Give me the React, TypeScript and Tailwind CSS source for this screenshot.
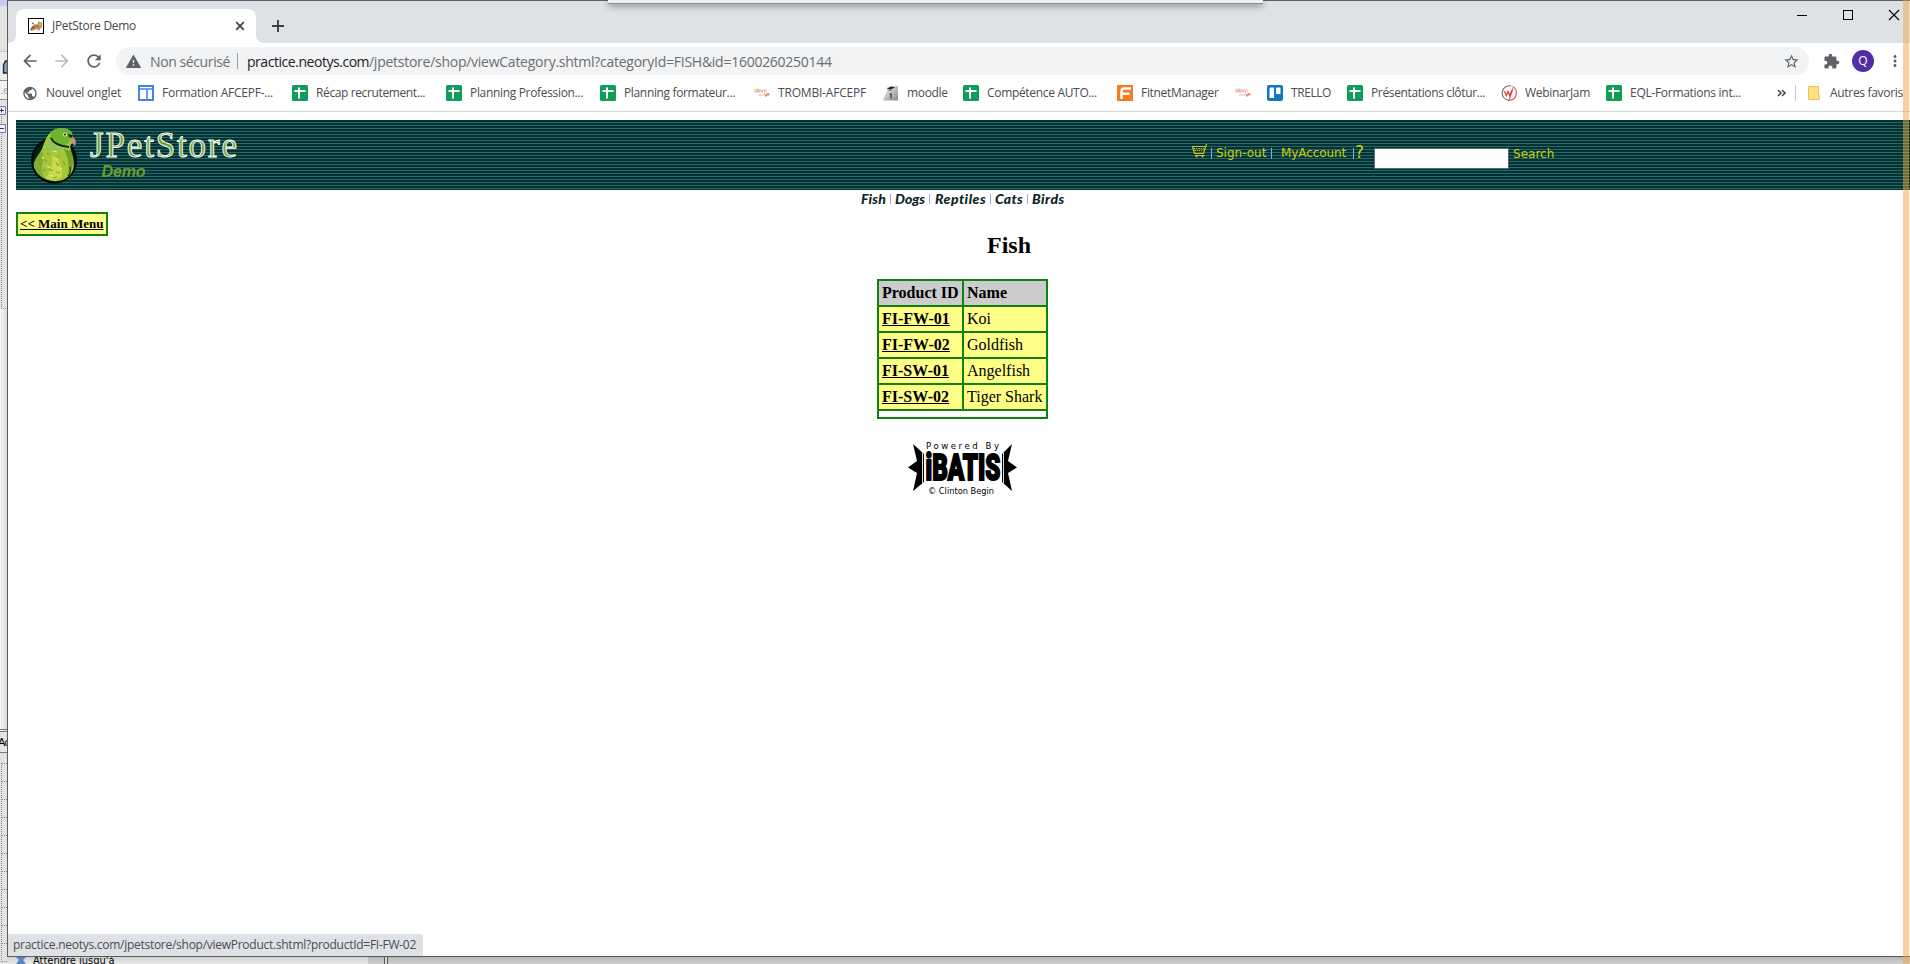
import type { ReactNode } from "react";
import { MdArrowBack, MdArrowForward, MdRefresh, MdWarning, MdStarBorder, MdExtension, MdMoreVert, MdPublic } from "react-icons/md";

const Sheet = () => (
  <svg width="16" height="16" viewBox="0 0 16 16">
    <rect width="16" height="16" rx="1.5" fill="#0f9d58" />
    <path d="M2.5 6h11M7 2.5v11" stroke="#fff" strokeWidth="2" fill="none" />
  </svg>
);

const Globe = () => <MdPublic className="size-[17px] text-[#5f6368]" />;

const Sites = () => (
  <svg width="16" height="16" viewBox="0 0 16 16">
    <rect x="1" y="1" width="14" height="14" fill="#fff" stroke="#4285e8" strokeWidth="2" />
    <path d="M1 4h14M9 4v11" stroke="#4285e8" strokeWidth="1.6" />
  </svg>
);

const Afcepf = () => (
  <svg width="16" height="16" viewBox="0 0 16 16">
    <g fill="none" strokeWidth="1">
      <circle cx="1.800" cy="5.800" r="1.300" stroke="#f2a57a" />
      <path d="M4 3.500v4" stroke="#e9856a" />
      <circle cx="6.200" cy="5.900" r="1.300" stroke="#f2a57a" />
      <path d="M8.500 7.500V5h2v2.500M12 4v3.500" stroke="#e3bcb0" />
      <path d="M4 10h6.500" stroke="#bcc6dc" />
      <path d="M10.500 8.500l1.500 3 1.200-3M13 9h3M14 8v3" stroke="#ee7a4a" />
    </g>
  </svg>
);

const Moodle = () => (
  <svg width="16" height="16" viewBox="0 0 16 16">
    <defs>
      <linearGradient id="md" x1="0" y1="0" x2="1" y2="1">
        <stop offset="0" stopColor="#fff" />
        <stop offset="1" stopColor="#858585" />
      </linearGradient>
    </defs>
    <path d="M0 15.500L4 5V1h11v14.500z" fill="url(#md)" />
    <path d="M3.500 4L8 1.500l4 .8-3.500 2z" fill="#222" />
    <path d="M5 5.500c1-1.500 3-1.500 4 0z" fill="#444" />
    <path d="M6.500 9h2.500M8 9.500v4" stroke="#333" strokeWidth="1.200" />
  </svg>
);

const Fitnet = () => (
  <svg width="16" height="16" viewBox="0 0 16 16">
    <rect width="16" height="16" fill="#f47b20" />
    <path d="M14 3.500H7Q4.500 3.500 4.500 6.500V14M4.500 8.800H12.500" stroke="#fff" strokeWidth="2.400" fill="none" />
  </svg>
);

const Trello = () => (
  <svg width="16" height="16" viewBox="0 0 16 16">
    <rect width="16" height="16" rx="2" fill="#0f77bd" />
    <rect x="2.500" y="2.500" width="4.500" height="10.500" rx=".6" fill="#fff" />
    <rect x="9" y="2.500" width="4.500" height="6.500" rx=".6" fill="#fff" />
  </svg>
);

const Webinar = () => (
  <svg width="16" height="16" viewBox="0 0 16 16" fill="none">
    <path d="M10.500 1A7.300 7.300 0 1 0 8 15.300" stroke="#777" strokeWidth="1.100" />
    <path d="M11.500 1.600A7.300 7.300 0 0 1 8 15.300L12 3.500" stroke="#d9544f" strokeWidth="1.100" />
    <path d="M3.500 6l1.800 4.500L7 6.500l1.700 4L11 5" stroke="#e0433e" strokeWidth="1.400" />
  </svg>
);

type Mark = { icon: ReactNode; text: string; slot: string; track: string };

const marks: Mark[] = [
  { icon: <Globe />, text: "Nouvel onglet", slot: "w-[116px]", track: "tracking-[-0.2px]" },
  { icon: <Sites />, text: "Formation AFCEPF-...", slot: "w-[154px]", track: "tracking-[-0.24px]" },
  { icon: <Sheet />, text: "Récap recrutement...", slot: "w-[154px]", track: "tracking-[-0.38px]" },
  { icon: <Sheet />, text: "Planning Profession...", slot: "w-[154px]", track: "tracking-[-0.33px]" },
  { icon: <Sheet />, text: "Planning formateur...", slot: "w-[154px]", track: "tracking-[-0.35px]" },
  { icon: <Afcepf />, text: "TROMBI-AFCEPF", slot: "w-[129px]", track: "tracking-[-0.19px]" },
  { icon: <Moodle />, text: "moodle", slot: "w-[80px]", track: "tracking-[-0.34px]" },
  { icon: <Sheet />, text: "Compétence AUTO...", slot: "w-[154px]", track: "tracking-[-0.32px]" },
  { icon: <Fitnet />, text: "FitnetManager", slot: "w-[118px]", track: "tracking-[-0.31px]" },
  { icon: <Afcepf />, text: "", slot: "w-[32px]", track: "" },
  { icon: <Trello />, text: "TRELLO", slot: "w-[80px]", track: "tracking-[-0.42px]" },
  { icon: <Sheet />, text: "Présentations clôtur...", slot: "w-[154px]", track: "tracking-[-0.36px]" },
  { icon: <Webinar />, text: "WebinarJam", slot: "w-[105px]", track: "tracking-[-0.31px]" },
  { icon: <Sheet />, text: "EQL-Formations int...", slot: "w-[171px]", track: "tracking-[-0.29px]" },
];

const TabStrip = () => (
  <div className="flex h-[43px] border-t border-[#5d5e66] bg-[#dee1e6]">
    <div className="w-2 bg-white">
      <div className="h-full w-full rounded-br-lg bg-[#dee1e6]" />
    </div>
    <div className="mt-2 flex w-[240px] items-center rounded-t-lg bg-white pl-3">
      <svg width="16" height="16" viewBox="0 0 16 16">
        <rect x=".5" y=".5" width="15" height="15" fill="#fff" stroke="#000" />
        <path d="M2 12l2-4 3-2 2 1 1.500-4 2 1.500L14 4v5l-2 2-1 2-2-2-3 1-2 1z" fill="#b98f5f" />
        <path d="M3 12l2-3 2 1M8 7l2 2M6 6l-2-1" stroke="#6b4a2b" fill="none" />
        <path d="M11 5h2v3h-2z" fill="#e0b55b" />
      </svg>
      <span className="ml-2 grow whitespace-pre text-[12px] tracking-[-0.29px] text-[#45484c]">JPetStore Demo</span>
      <svg width="10" height="10" viewBox="0 0 10 10" className="mr-[11px]">
        <path d="M1.200 1.200l7.600 7.600M8.800 1.200L1.200 8.800" stroke="#3c4043" strokeWidth="1.700" />
      </svg>
    </div>
    <div className="w-2 bg-white">
      <div className="h-full w-full rounded-bl-lg bg-[#dee1e6]" />
    </div>
    <svg width="12" height="12" viewBox="0 0 12 12" className="mt-[19px] ml-2">
      <path d="M6 0v12M0 6h12" stroke="#3c4043" strokeWidth="1.900" />
    </svg>
    <div className="grow" />
    <svg width="104" height="12" viewBox="0 0 104 12" className="mt-2 mr-[9px]" fill="none" stroke="#000">
      <path d="M0 6.500h10" />
      <rect x="46.500" y="1.500" width="9" height="9" />
      <path d="M92 1l10 10M102 1l-10 10" strokeWidth="1.100" />
    </svg>
  </div>
);

const Toolbar = () => (
  <div className="flex h-9 items-center bg-white">
    <MdArrowBack className="ml-3 size-5 text-[#5f6368]" />
    <MdArrowForward className="ml-3 size-5 text-[#babcbe]" />
    <MdRefresh className="ml-3 size-5 text-[#5f6368]" />
    <div className="ml-3 flex h-7 w-[1693px] items-center rounded-full bg-[#f1f3f4] pl-[9px] text-[14px] text-[#6a6e73]">
      <MdWarning className="size-[17px] text-[#5f6368]" />
      <span className="ml-2 w-[80px] whitespace-pre tracking-[-0.4px]">Non sécurisé</span>
      <div className="ml-[7px] h-4 w-px bg-[#9a9da1]" />
      <span className="ml-[9px] w-[122px] whitespace-pre tracking-[-0.46px] text-[#202124]">practice.neotys.com</span>
      <span className="whitespace-pre tracking-[-0.26px]">/jpetstore/shop/viewCategory.shtml?categoryId=FISH&amp;id=1600260250144</span>
      <MdStarBorder className="mr-[9px] ml-auto size-[17px] text-[#5f6368]" />
    </div>
    <MdExtension className="ml-[14px] size-[17px] text-[#5f6368]" />
    <div className="ml-3 flex size-[22px] items-center justify-center rounded-full bg-[#512da8] text-[12px] text-white">Q</div>
    <MdMoreVert className="ml-3 size-[18px] text-[#5f6368]" />
  </div>
);

const Bookmarks = () => (
  <div className="flex h-[33px] items-center border-b border-[#d5d7d9] bg-white pb-1 pl-[14px] text-[12px] text-[#4a4c50]">
    {marks.map((m, i) => (
      <div key={i} className={"flex shrink-0 items-center gap-2 whitespace-pre " + m.slot}>
        <span className="flex w-4 shrink-0 justify-center">{m.icon}</span>
        {m.text && <span className={m.track}>{m.text}</span>}
      </div>
    ))}
    <svg width="9" height="8" viewBox="0 0 9 8" fill="none" stroke="#4a4c50" strokeWidth="1.600">
      <path d="M1 1l3 3-3 3M5 1l3 3-3 3" />
    </svg>
    <div className="ml-[9px] h-4 w-px bg-[#c4c6c9]" />
    <svg width="12" height="14" viewBox="0 0 12 14" className="ml-3">
      <path d="M.5.500h10v9h1v4H.500z" fill="#ffe08a" stroke="#e8c64f" />
    </svg>
    <span className="ml-[10px] whitespace-pre tracking-[-0.31px]">Autres favoris</span>
  </div>
);

const Parrot = () => (
  <svg width="48" height="58" viewBox="0 0 48 58">
    <circle cx="24" cy="33.500" r="22" fill="#041f18" stroke="#000806" strokeWidth="2" />
    <path d="M21 5C26 0 38-1 42 6c2 4 1 8 0 10-2 2-2 4-1 8 3 8 4 15 1 21-4 7-12 10-19 9C14 53 7 48 4 40c-1-5 3-10 7-16 3-6 4-14 10-19z" fill="#a6c63a" />
    <path d="M21 5C26 0 38-1 42 6l-2 6c-1 5-4 7-9 6-6-1-10-4-11-8z" fill="#6db32f" />
    <path d="M20 10c0 5 5 8 11 9 3 0 4 1 5 3-6 3-14 2-21 0 1-5 3-9 5-12z" fill="#95c355" />
    <path d="M4 40c-1-5 3-10 7-16 3 3 3 8 1 14-1 6 0 9 3 13C9 49 6 45 4 40z" fill="#7fae35" />
    <path d="M22 28c7 4 11 12 10 22-4 3-12 4-16 1 5-7 7-14 6-23z" fill="#c7da4b" />
    <path d="M34 22c3 6 6 15 4 24 6-4 6-13 3-22z" fill="#6fa02c" />
    <path d="M9 36l3 2M14 32l3 3M12 44l4-2M19 42l4 2M26 36l3 3M26 45l4 1M17 26l3 2M33 34l2 4M23 51l4-1" stroke="#83a82a" strokeWidth="1.200" />
    <path d="M12 30l2 2M17 39l3 2M25 31l3 2M29 41l3 1M20 48l3 1M23 24l4 1" stroke="#e4ee88" strokeWidth="1.200" />
    <path d="M21 11c2 5 8 8 18 9" stroke="#0c2413" strokeWidth="2" fill="none" />
    <path d="M41 10c4 0 6 4 4 9l-2-2c-2-2-3-4-2-7z" fill="#cf8c86" />
    <path d="M38 7l5 1-1 3-3-1z" fill="#123018" />
    <circle cx="35" cy="7.500" r="2" fill="#e2edc8" />
    <circle cx="35" cy="7.500" r="1" fill="#111" />
    <path d="M40 40c1 3 0 7-2 9" stroke="#1f4412" strokeWidth="1.600" fill="none" />
  </svg>
);

const Cart = () => (
  <svg width="15" height="14" viewBox="0 0 15 14" fill="none" stroke="#d6c51c">
    <path d="M0 2.500h13M14.500 0l-3 9.500H2.500L.5 2.500M3 11.500h10" strokeWidth="1.200" />
    <path d="M2 4.500h10M2.500 6.500h9" strokeDasharray="1.200 1" strokeWidth="1.200" />
    <circle cx="4.500" cy="12.500" r="1" fill="#d6c51c" stroke="none" />
    <circle cx="10.500" cy="12.500" r="1" fill="#d6c51c" stroke="none" />
  </svg>
);

const Banner = () => (
  <div className="flex h-[70px] bg-[repeating-linear-gradient(180deg,#003333_0px,#003333_2px,#2f6464_2px,#2f6464_3px)]">
    <div className="mt-[7px] ml-[14px]">
      <Parrot />
    </div>
    <svg width="156" height="60" viewBox="0 0 156 60" className="mt-[7px] ml-[7px] shrink-0">
      <text x="5" y="29.500" fontSize="35" textLength="147" lengthAdjust="spacing" fill="#6f9f2f" stroke="#f4f9f4" strokeWidth="1" className="font-['Liberation_Serif']">JPetStore</text>
      <text x="16.500" y="50" fontSize="16" fontWeight="700" fontStyle="italic" textLength="44" fill="#669f2c" className="font-['Liberation_Sans']">Demo</text>
    </svg>
    <div className="mt-6 ml-[951px] flex h-[18px] items-start font-['DejaVu_Sans'] text-[12px] leading-[18px] whitespace-pre text-[#d0cc10]">
      <Cart />
      <div className="mt-[4px] ml-[4px] h-[11px] w-px bg-[#8fa2f0]" />
      <span className="ml-[4px] w-[50px]">Sign-out</span>
      <div className="mt-[4px] ml-[5px] h-[11px] w-px bg-[#7fb0e8]" />
      <span className="ml-[9px] w-[65px] tracking-[-0.1px]">MyAccount</span>
      <div className="mt-[4px] ml-[7px] h-[11px] w-px bg-[#8fa2f0]" />
      <span className="ml-[1px] text-[17px] leading-[16px]">?</span>
    </div>
    <div className="mt-[28px] ml-[10px] h-[21px] w-[135px] border border-[#5b6b6b] bg-white" />
    <span className="mt-[25px] ml-[4px] font-['DejaVu_Sans'] text-[12px] leading-[18px] text-[#d0cc10]">Search</span>
  </div>
);

const Bar = () => <div className="h-[10px] w-px bg-[#a5a5dd]" />;

const Categories = () => (
  <div className="ml-[845px] flex h-[18px] items-center pb-[1px] font-['Lato'] text-[14px] leading-[17px] font-black whitespace-pre text-[#0c2424] italic">
    <span className="w-[29px] tracking-[0.2px]">Fish</span>
    <Bar />
    <span className="ml-1 w-[34px]">Dogs</span>
    <Bar />
    <span className="ml-[5px] w-[55px] tracking-[0.5px]">Reptiles</span>
    <Bar />
    <span className="ml-1 w-[32px] tracking-[0.3px]">Cats</span>
    <Bar />
    <span className="ml-1 tracking-[0.5px]">Birds</span>
  </div>
);

const products = [
  ["FI-FW-01", "Koi"],
  ["FI-FW-02", "Goldfish"],
  ["FI-SW-01", "Angelfish"],
  ["FI-SW-02", "Tiger Shark"],
];

const Catalog = () => (
  <div className="grid w-[171px] grid-cols-[83px_82px] gap-[2px] bg-[#128012] p-[2px] text-[16px] leading-[24px] text-black">
    <div className="bg-[#cccccc] pl-[3px] font-bold whitespace-pre">Product ID</div>
    <div className="bg-[#cccccc] pl-[3px] font-bold">Name</div>
    {products.map(([id, name]) => [
      <div key={id} className="bg-[#ffff88] pl-[3px] font-bold underline">{id}</div>,
      <div key={name} className="bg-[#ffff88] pl-[3px] whitespace-pre">{name}</div>,
    ])}
    <div className="col-span-2 h-[6px] bg-white" />
  </div>
);

const Ibatis = () => (
  <svg width="110" height="57" viewBox="0 0 110 57">
    <text x="18" y="8.500" fontSize="9.500" textLength="73" fill="#000" className="font-['DejaVu_Sans_Condensed','DejaVu_Sans']">Powered By</text>
    <path d="M5 4L16 14V42L5 51L9 33L0 27.500L9 21z" fill="#000" />
    <path d="M104 4L94 14V42L104 51L100 33L109 27.500L100 21z" fill="#000" />
    <path d="M14.500 13v30M95.500 13v30" stroke="#ddd" strokeWidth="1" />
    <g transform="translate(17.500 40.300) scale(1 1.520)">
      <text x="0" y="0" fontSize="24" fontWeight="900" textLength="75" lengthAdjust="spacingAndGlyphs" fill="#000" stroke="#000" strokeWidth="1.300" className="font-['Roboto']">iBATIS</text>
    </g>
    <text x="20" y="53.500" fontSize="9.500" textLength="66" lengthAdjust="spacingAndGlyphs" fill="#000" className="font-['DejaVu_Sans_Condensed','DejaVu_Sans']">© Clinton Begin</text>
  </svg>
);

const BackdropLeft = () => (
  <div className="flex h-[964px] w-[7px] shrink-0 flex-col overflow-hidden bg-[#e3e3e3]">
    <div className="h-[6px] bg-[#c6cbf0]" />
    <div className="h-[46px] border-b border-[#c9c9c9] bg-[#e2e2e0]" />
    <div className="flex h-7 items-center bg-[#ececec]">
      <svg width="7" height="20" viewBox="0 0 7 20">
        <path d="M3.500 17V9l2-4h2v12z" fill="#8ea6c4" stroke="#14283f" strokeWidth="1.400" />
      </svg>
    </div>
    <div className="h-5 border-y border-[#8b8b8b] bg-[#f1f1f1] font-['Liberation_Sans'] text-[11px] leading-[18px] text-[#aaa]">.e</div>
    <div className="h-[5px]" />
    <svg width="7" height="204" viewBox="0 0 7 204" fill="none" stroke="#8a8a8a">
      <path d="M1.500 11v192.500H7" strokeDasharray="1 1" />
      <path d="M-3 1.500H5.500v8H-3M-3 19.500H5.500v8H-3" fill="#eef" stroke="#77779e" />
      <path d="M0 5.500h4M1.500 3.500v4M0 23.500h4" stroke="#333366" />
    </svg>
    <div className="h-[420px] bg-linear-to-r from-[#f4f4f4] to-[#dcdcdc]" />
    <div className="h-[3px] border-y border-[#777] bg-[#eee]" />
    <div className="h-[21px] border-b border-[#777] bg-[#e4e4e4] font-['Liberation_Sans'] text-[11px] leading-[20px] tracking-[-0.8px] text-black">
      <span className="-ml-[2px]">Ac</span>
    </div>
    <svg width="7" height="210" viewBox="0 0 7 210" fill="none" stroke="#8a8a8a" strokeDasharray="1 1">
      <path d="M1.500 10v200M2 10.500h5M2 28.500h5M2 46.500h5M2 64.500h5M2 82.500h5M2 100.500h5M2 118.500h5M2 136.500h5M2 154.500h5M2 172.500h5M2 190.500h5M2 208.500h5" />
    </svg>
  </div>
);

const BackdropBottom = () => (
  <div className="flex h-[7px] overflow-hidden bg-linear-to-b from-[#b5b5b5] to-[#d2d2d2]">
    <div className="flex w-[361px] bg-linear-to-b from-[#cfcfcf] to-[#ececec]">
      <svg width="12" height="7" viewBox="0 0 12 7" className="ml-2">
        <path d="M1 0h10L8 3l3 4H1l3-4z" fill="#5e83c4" />
      </svg>
      <span className="ml-[6px] font-['DejaVu_Sans_Condensed','DejaVu_Sans'] text-[11px] leading-[8px] whitespace-pre text-black">Attendre jusqu'à</span>
    </div>
    <div className="ml-4 w-[4px] border-x border-[#555] bg-[#ddd]" />
  </div>
);

export default function App() {
  return (
    <div className="relative flex h-[964px] w-[1910px] overflow-hidden font-['Open_Sans',sans-serif]">
      <BackdropLeft />
      <div className="flex min-w-0 grow flex-col">
        <div className="flex h-[957px] flex-col overflow-hidden border-b border-l border-[#5b5b5b] bg-white">
          <TabStrip />
          <Toolbar />
          <Bookmarks />
          <div className="flex grow flex-col pt-2 pl-2 font-['Liberation_Serif',serif]">
            <Banner />
            <Categories />
            <div className="flex h-[71px] items-start">
              <div className="mt-1 h-6 w-[92px] border-2 border-[#128012] bg-[#ffff88] pl-[2px] text-[13px] leading-[20px] font-bold whitespace-pre text-black underline">&lt;&lt; Main Menu</div>
              <h2 className="mt-[20px] grow text-center text-[24px] leading-[34px] font-bold text-black">Fish</h2>
            </div>
            <div className="flex flex-col items-center gap-[21px] pr-[1px]">
              <Catalog />
              <Ibatis />
            </div>
            <div className="grow" />
            <div className="-ml-2 h-[22px] w-[415px] rounded-tr bg-[#dee1e6] pl-[5px] font-['Open_Sans'] text-[12px] leading-[22px] tracking-[-0.27px] whitespace-pre text-[#4a4c50]">practice.neotys.com/jpetstore/shop/viewProduct.shtml?productId=FI-FW-02</div>
          </div>
        </div>
        <BackdropBottom />
      </div>
      <div className="absolute top-0 left-[608px] h-[4px] w-[655px] border-b border-[#8b8b8b] bg-[#f0f0f3] shadow-[0_2px_6px_rgba(0,0,0,0.45)]" />
      <div className="absolute top-0 left-[1903px] h-[964px] w-[6px] bg-[#f0a53c]/50" />
    </div>
  );
}
